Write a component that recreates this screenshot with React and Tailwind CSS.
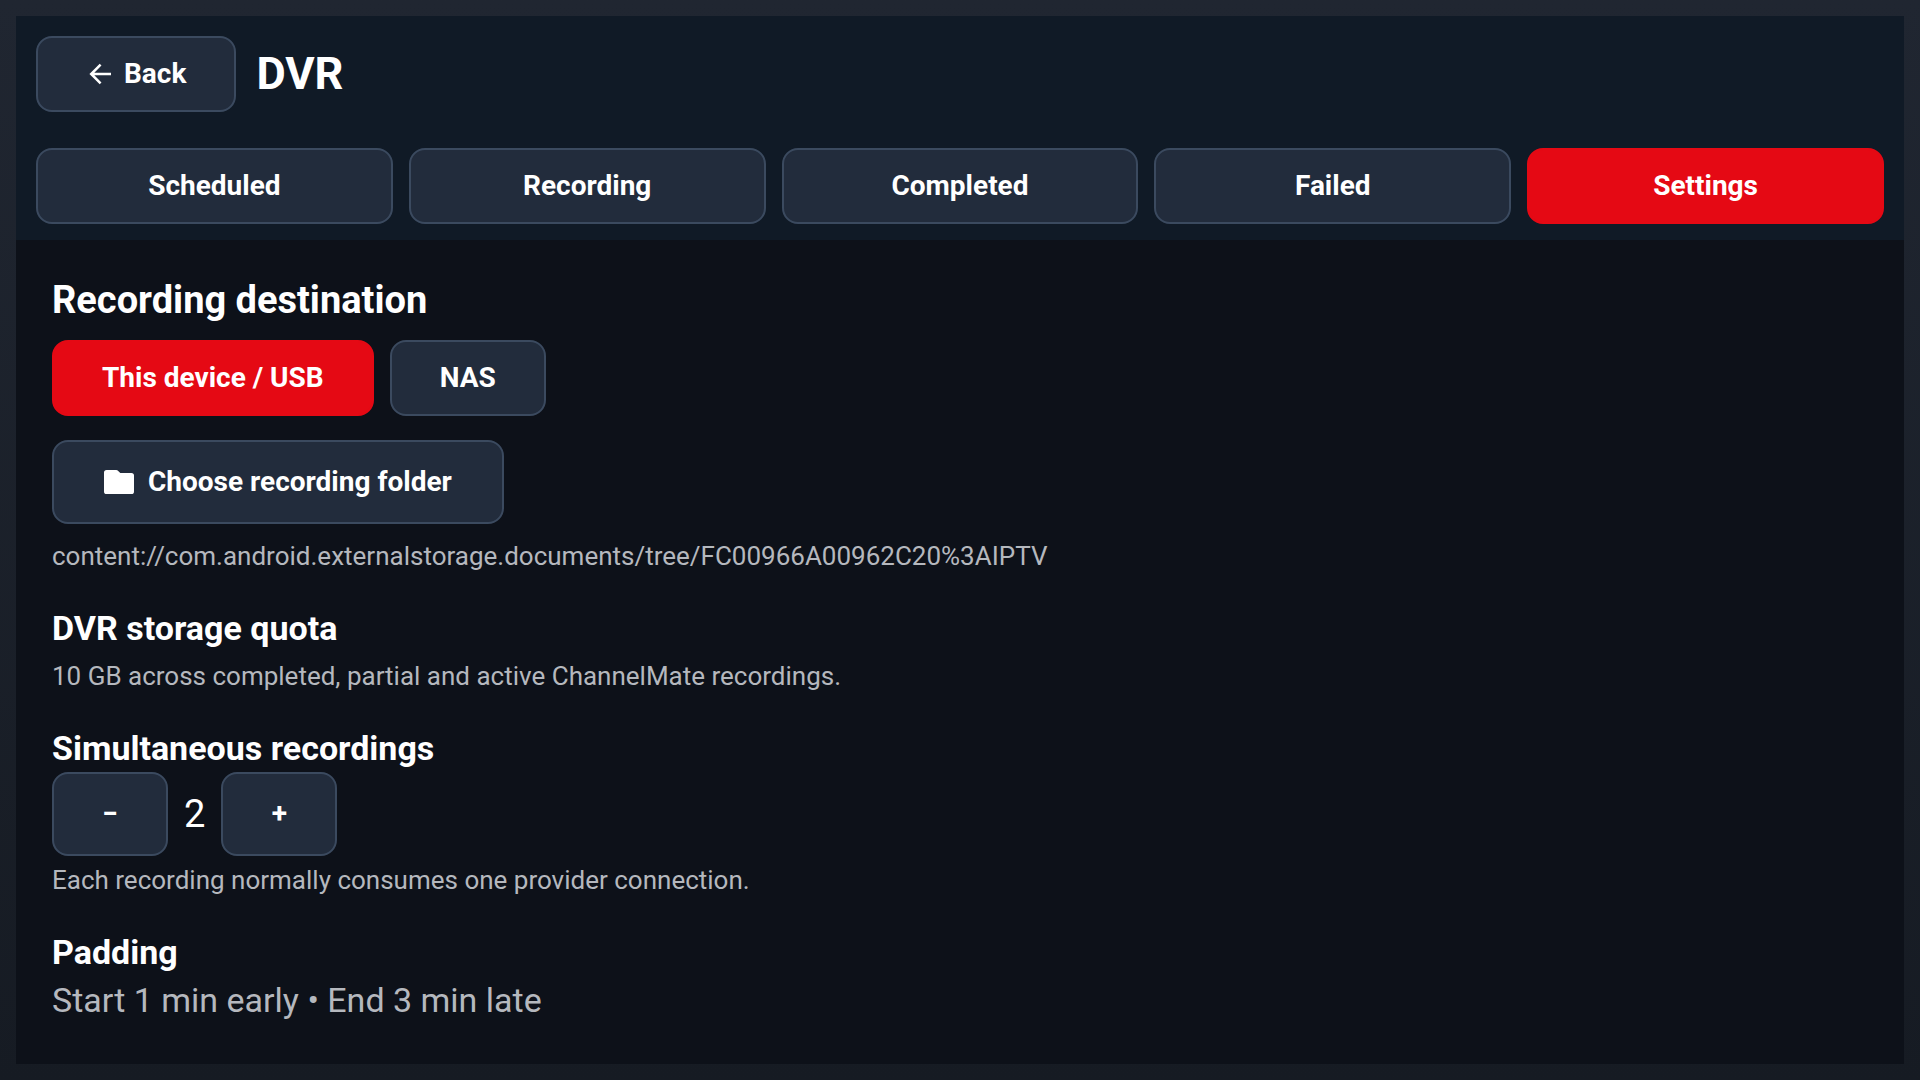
import { useState } from 'react';
import { clsx } from 'clsx';

const TABS = ['Scheduled', 'Recording', 'Completed', 'Failed', 'Settings'];
const DESTINATIONS = ['This device / USB', 'NAS'];

function TvButton({ active = false, className, children, ...props }) {
    return (
        <button
            type="button"
            className={clsx(
                'flex items-center justify-center rounded-2xl border-2 text-[28px] leading-10 font-bold text-white',
                active ? 'border-[#e50914] bg-[#e50914]' : 'border-[#3b4a5f] bg-[#222c3c]',
                className
            )}
            {...props}
        >
            {children}
        </button>
    );
}

function ArrowBackIcon() {
    return (
        <svg viewBox="0 0 28 28" className="h-7 w-7" fill="none" stroke="currentColor" strokeWidth="2.5" aria-hidden="true">
            <path d="M25 14H5.5M14.6 4.6 5.2 14l9.4 9.4" />
        </svg>
    );
}

function FolderIcon() {
    return (
        <svg viewBox="0 0 30 28" className="h-7 w-[30px]" fill="currentColor" aria-hidden="true">
            <path d="M2.6 2h9.6c.8 0 1.5.3 2 .9L16.300 5H27.400A2.600 2.600 0 0 1 30 7.600V23.400A2.600 2.600 0 0 1 27.400 26H2.600A2.600 2.600 0 0 1 0 23.400V4.600A2.600 2.600 0 0 1 2.600 2z" />
        </svg>
    );
}

function SectionTitle({ children }) {
    return <h2 className="text-[34px] leading-[48px] font-bold text-white">{children}</h2>;
}

function Hint({ className, children }) {
    return <p className={clsx('text-[26px] leading-8 text-[#b5b8be]', className)}>{children}</p>;
}

export default function App() {
    const [tab, setTab] = useState('Settings');
    const [destination, setDestination] = useState('This device / USB');
    const [simultaneous, setSimultaneous] = useState(2);

    return (
        <div className="flex min-h-screen flex-col bg-linear-to-b from-[#202631] to-[#161b23] p-4 font-['Roboto',sans-serif]">
            <div className="flex flex-1 flex-col bg-[#0d1119]">
                <header className="bg-[#101a26] px-5 pt-5 pb-4">
                    <div className="flex items-center gap-5">
                        <TvButton className="h-[76px] gap-2.5 px-12">
                            <ArrowBackIcon />
                            Back
                        </TvButton>
                        <h1 className="text-[45px] leading-[56px] font-bold text-white">DVR</h1>
                    </div>
                    <nav className="mt-9 grid grid-cols-5 gap-4">
                        {TABS.map((name) => (
                            <TvButton key={name} active={name === tab} className="h-[76px]" onClick={() => setTab(name)}>
                                {name}
                            </TvButton>
                        ))}
                    </nav>
                </header>

                <main className="flex flex-col gap-8 px-9 pt-8 pb-10">
                    <section>
                        <h2 className="text-[38px] leading-[56px] font-bold text-white">Recording destination</h2>
                        <div className="mt-3 flex gap-4">
                            {DESTINATIONS.map((name) => (
                                <TvButton
                                    key={name}
                                    active={name === destination}
                                    className="h-[76px] px-12"
                                    onClick={() => setDestination(name)}
                                >
                                    {name}
                                </TvButton>
                            ))}
                        </div>
                        <TvButton className="mt-6 h-[84px] gap-3.5 px-[50px]">
                            <FolderIcon />
                            Choose recording folder
                        </TvButton>
                        <Hint className="mt-4">content://com.android.externalstorage.documents/tree/FC00966A00962C20%3AIPTV</Hint>
                    </section>

                    <section>
                        <SectionTitle>DVR storage quota</SectionTitle>
                        <Hint className="mt-2">10 GB across completed, partial and active ChannelMate recordings.</Hint>
                    </section>

                    <section>
                        <SectionTitle>Simultaneous recordings</SectionTitle>
                        <div className="flex items-center gap-4">
                            <TvButton
                                className="h-[84px] w-[116px]"
                                aria-label="Fewer recordings"
                                onClick={() => setSimultaneous(Math.max(1, simultaneous - 1))}
                            >
                                −
                            </TvButton>
                            <span className="text-[38px] leading-[56px] text-white">{simultaneous}</span>
                            <TvButton
                                className="h-[84px] w-[116px]"
                                aria-label="More recordings"
                                onClick={() => setSimultaneous(simultaneous + 1)}
                            >
                                +
                            </TvButton>
                        </div>
                        <Hint className="mt-2">Each recording normally consumes one provider connection.</Hint>
                    </section>

                    <section>
                        <SectionTitle>Padding</SectionTitle>
                        <p className="text-[34px] leading-[48px] text-[#b5b8be]">Start 1 min early • End 3 min late</p>
                    </section>
                </main>
            </div>
        </div>
    );
}
